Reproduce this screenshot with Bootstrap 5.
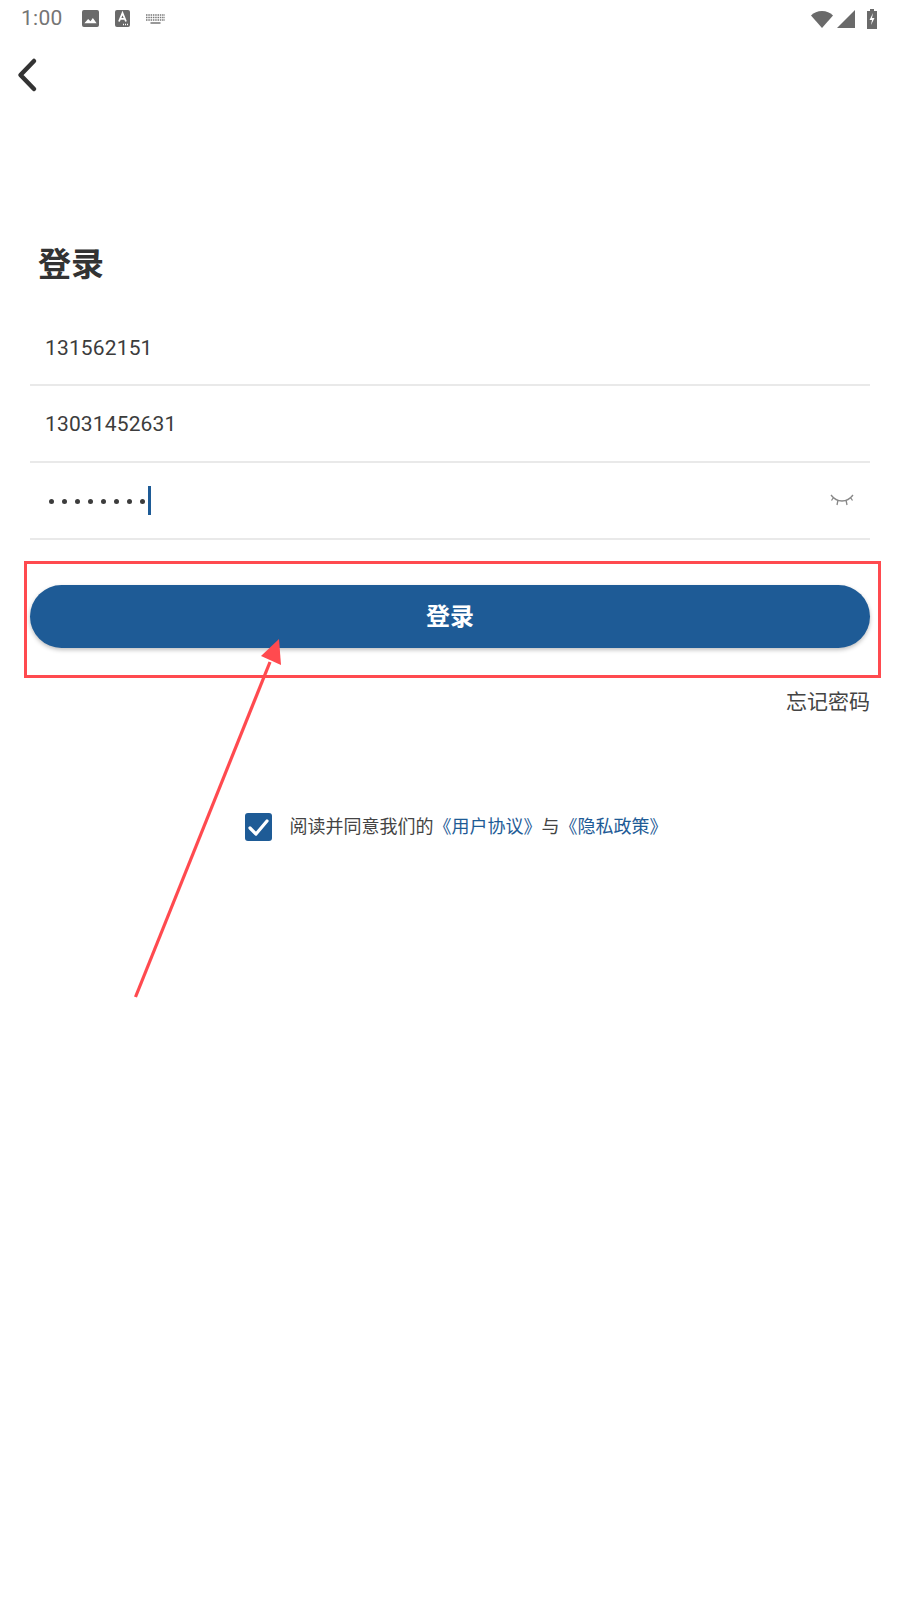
<!DOCTYPE html>
<html lang="zh">
<head>
    <meta charset="UTF-8">
    <meta name="viewport" content="width=device-width, initial-scale=1.0">
    <title>登录</title>
    <link rel="stylesheet" href="https://cdn.jsdelivr.net/npm/bootstrap@5.3.3/dist/css/bootstrap.min.css">
    <style>
        body { background: #fff; color: #3c3c3c; font-family: Roboto, "Noto Sans CJK SC", sans-serif; height: 1600px; position: relative; overflow: hidden; }
        .status-bar { height: 37px; padding: 0 23px 0 21px; color: #757575; }
        .status-time { font-size: 21px; line-height: 37px; width: 41px; margin-right: 20px; letter-spacing: .3px; }
        .back-row { height: 75px; padding-left: 16px; }
        .login-body { padding: 130px 30px 0; }
        .login-title { font-size: 33px; font-weight: 700; line-height: 46px; margin: 0 0 22px 8px; color: #333; }
        .field-row { height: 77px; border-bottom: 2px solid #e9e9e9; padding: 3px 15px 0; font-size: 21px; letter-spacing: .15px; }
        .field-row:first-of-type { height: 76px; }
        .pwd-dots { display: flex; gap: 8px; margin-left: 4px; margin-top: -2px; }
        .pwd-dots i { width: 5px; height: 5px; border-radius: 50%; background: #3c3c3c; display: block; }
        .caret-bar { width: 3px; height: 29px; background: #1e5b96; margin-left: 3px; margin-top: -3px; }
        .eye-icon { margin-right: 1px; margin-top: -3px; }
        .btn-login { display: block; width: 100%; height: 63px; margin-top: 45px; border-radius: 32px; border: 0; background: #1e5b96; color: #fff; font-size: 24px; font-weight: 700; box-shadow: 0 2px 4px rgba(0,0,0,.25); }
        .btn-login:hover, .btn-login:active { background: #1e5b96 !important; color: #fff !important; }
        .forgot { font-size: 21px; line-height: 30px; margin-top: 39px; color: #444; }
        .agree { margin-top: 96px; padding-left: 12px; font-size: 18px; line-height: 28px; color: #444; }
        .agree a { color: #1e5b96; text-decoration: none; }
        .check-box { width: 27px; height: 28px; border-radius: 3px; background: #1e5b96; margin-right: 18px; }
        .wifi-icon { margin-right: 4px; }
        .signal-icon { margin-right: 12px; }
        .note-box { position: absolute; left: 24px; top: 561px; width: 857px; height: 117px; border: 3px solid #ff4a4f; }
        .note-arrow { position: absolute; left: 0; top: 0; }
    </style>
</head>
<body>
    <div class="status-bar d-flex align-items-center">
        <span class="status-time">1:00</span>
        <svg width="17" height="17" viewBox="0 0 18 18" class="me-3"><rect x="0" y="0" width="18" height="18" rx="2" fill="#6a6a6a"/><path d="M2.500 14 6.500 9.500 9 12 11.500 8.500 15.500 14Z" fill="#fff"/></svg>
        <svg width="15" height="17" viewBox="0 0 15 17" class="me-3"><rect width="15" height="17" rx="2" fill="#6a6a6a"/><path d="M4 11.500 7.500 3 11 11.500M5.200 8.800H9.800" fill="none" stroke="#fff" stroke-width="1.800"/><path d="M8 14.500h1M10 14.500h1M12 14.500h1" stroke="#fff" stroke-width="1.500"/></svg>
        <svg width="19" height="10" viewBox="0 0 19 10"><path d="M0 1h19M0 3.500h19M0 6h19" stroke="#777" stroke-width="1.500" stroke-dasharray="1.500 .8"/><path d="M4.500 9h10" stroke="#777" stroke-width="1.500"/></svg>
        <span class="ms-auto d-flex align-items-center">
            <svg class="wifi-icon" width="22" height="18" viewBox="0 0 22 18"><path d="M0 5.500C3 2.500 6.500 1 11 1S19 2.500 22 5.500L11 18Z" fill="#6a6a6a"/></svg>
            <svg class="signal-icon" width="18" height="18" viewBox="0 0 18 18"><path d="M0 18 18 0V18Z" fill="#6a6a6a"/></svg>
            <svg width="10" height="20" viewBox="0 0 10 20"><path d="M3 0h4v2h3v18H0V2h3Z" fill="#6a6a6a"/><path d="M6 4 2.500 11H5L4 16 7.500 9H5Z" fill="#fff"/></svg>
        </span>
    </div>

    <div class="back-row d-flex align-items-center">
        <svg width="22" height="36" viewBox="0 0 22 36"><path d="M18 4 4.500 18 18 32" fill="none" stroke="#333" stroke-width="4.500" stroke-linecap="round" stroke-linejoin="round"/></svg>
    </div>

    <div class="login-body">
        <h1 class="login-title">登录</h1>
        <div class="field-row d-flex align-items-center">131562151</div>
        <div class="field-row d-flex align-items-center">13031452631</div>
        <div class="field-row d-flex align-items-center">
            <span class="pwd-dots"><i></i><i></i><i></i><i></i><i></i><i></i><i></i><i></i></span>
            <span class="caret-bar"></span>
            <svg class="eye-icon ms-auto" width="24" height="13" viewBox="0 0 24 13"><path d="M1 1C4 5 8 7 12 7S20 5 23 1M3.500 3.500 1.500 6.500M8 6 7 11M16 6 17 11M20.500 3.500 22.500 6.500" fill="none" stroke="#888" stroke-width="1.300"/></svg>
        </div>
        <button type="button" class="btn btn-login">登录</button>
        <div class="forgot text-end">忘记密码</div>
        <div class="agree d-flex justify-content-center align-items-center">
            <span class="check-box d-flex align-items-center justify-content-center">
                <svg width="21" height="17" viewBox="0 0 21 17"><path d="M2 9 8 15 19 2" fill="none" stroke="#fff" stroke-width="3.200" stroke-linecap="round" stroke-linejoin="round"/></svg>
            </span>
            <span>阅读并同意我们的<a href="#">《用户协议》</a>与<a href="#">《隐私政策》</a></span>
        </div>
    </div>

    <!-- annotation drawn over the screenshot -->
    <div class="note-box"></div>
    <svg class="note-arrow" width="900" height="1600" viewBox="0 0 900 1600">
        <path d="M135.500 997 270 662" fill="none" stroke="#ff4a4f" stroke-width="3.200"/>
        <path d="M279 639 281 665 261 656Z" fill="#ff4a4f"/>
    </svg>
</body>
</html>
